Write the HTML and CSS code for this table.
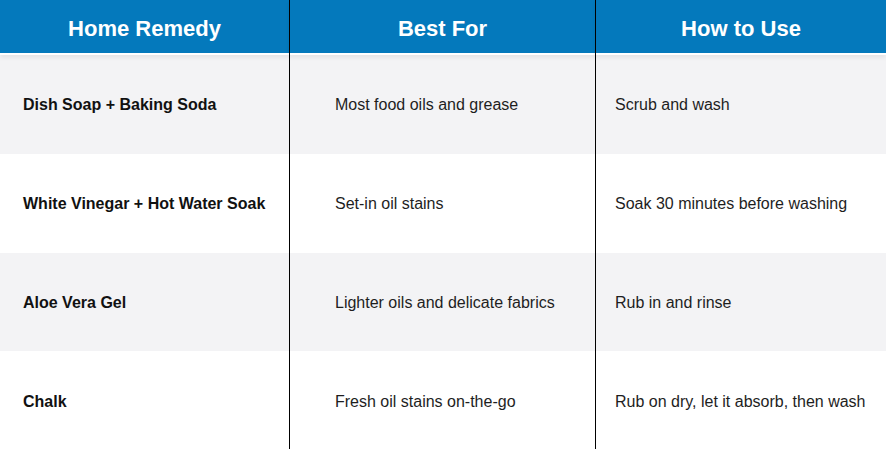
FILE: index.html
```html
<!DOCTYPE html>
<html>
<head>
<meta charset="utf-8">
<link rel="stylesheet" href="styles.css">
</head>
<body>
<div class="table">
  <div class="hcell c1">Home Remedy</div>
  <div class="hcell c2">Best For</div>
  <div class="hcell c3">How to Use</div>

  <div class="cell c1 name gray">Dish Soap + Baking Soda</div>
  <div class="cell c2 gray">Most food oils and grease</div>
  <div class="cell c3 gray">Scrub and wash</div>

  <div class="cell c1 name">White Vinegar + Hot Water Soak</div>
  <div class="cell c2">Set-in oil stains</div>
  <div class="cell c3">Soak 30 minutes before washing</div>

  <div class="cell c1 name gray">Aloe Vera Gel</div>
  <div class="cell c2 gray">Lighter oils and delicate fabrics</div>
  <div class="cell c3 gray">Rub in and rinse</div>

  <div class="cell c1 name">Chalk</div>
  <div class="cell c2">Fresh oil stains on-the-go</div>
  <div class="cell c3">Rub on dry, let it absorb, then wash</div>
</div>
</body>
</html>
```

FILE: styles.css
```css
html, body {
  margin: 0;
  padding: 0;
  background: #ffffff;
}
body {
  font-family: "Liberation Sans", Arial, sans-serif;
  width: 886px;
  height: 449px;
  overflow: hidden;
}
.table {
  display: grid;
  grid-template-columns: 289px 306px 291px;
  grid-template-rows: 55px 99px 99px 98px 101px;
}
.hcell {
  background: linear-gradient(#0479bc 0, #0479bc 53px, #ffffff 53px, #ffffff 55px);
  color: #ffffff;
  font-weight: bold;
  font-size: 22px;
  display: flex;
  align-items: center;
  justify-content: center;
  padding-top: 2px;
  box-sizing: border-box;
  position: relative;
  z-index: 1;
  box-shadow: 0 3px 4px rgba(0, 0, 0, 0.06);
}
.cell {
  display: flex;
  align-items: center;
  font-size: 16px;
  color: #1e1e1e;
  box-sizing: border-box;
  padding-top: 1px;
}
.cell.gray {
  background: #f3f3f5;
}
.c2, .c3 {
  border-left: 1.5px solid #000000;
}
.cell.c1 {
  padding-left: 23px;
}
.cell.c2 {
  padding-left: 45px;
}
.cell.c3 {
  padding-left: 19px;
}
.name {
  font-weight: bold;
  color: #111111;
}
```
